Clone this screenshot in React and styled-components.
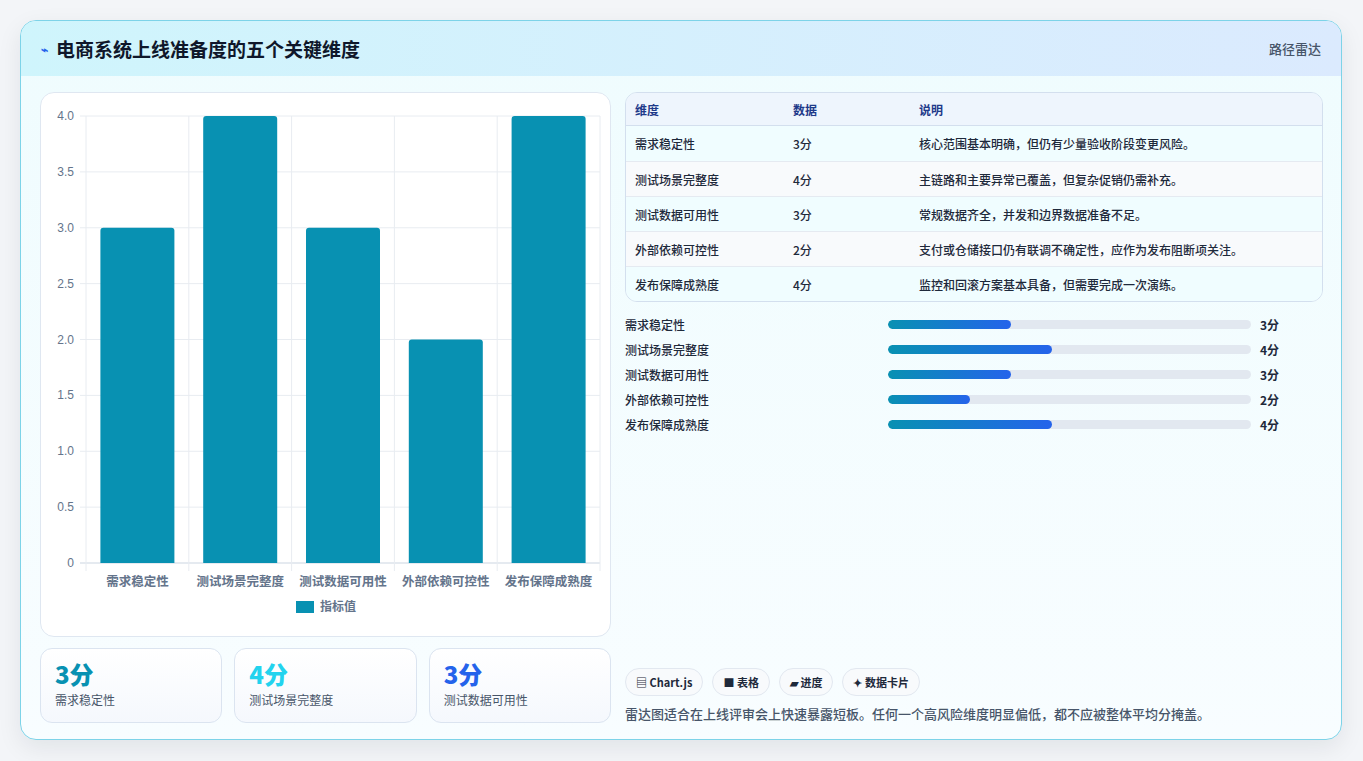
import React from "react";
import styled, { createGlobalStyle } from "styled-components";

const G = createGlobalStyle`
  html,body{margin:0;padding:0;background:#f3f5f8;}
  body{font-family:"Noto Sans CJK SC","Noto Sans",sans-serif;color:#1e293b;}
  *{box-sizing:border-box;}
`;

const data = [
  { name: "需求稳定性", v: 3, note: "核心范围基本明确，但仍有少量验收阶段变更风险。" },
  { name: "测试场景完整度", v: 4, note: "主链路和主要异常已覆盖，但复杂促销仍需补充。" },
  { name: "测试数据可用性", v: 3, note: "常规数据齐全，并发和边界数据准备不足。" },
  { name: "外部依赖可控性", v: 2, note: "支付或仓储接口仍有联调不确定性，应作为发布阻断项关注。" },
  { name: "发布保障成熟度", v: 4, note: "监控和回滚方案基本具备，但需要完成一次演练。" },
];

const Page = styled.div`padding:20px 20px 20px 20px;width:1363px;height:761px;`;
const Card = styled.div`
  width:1322px;height:720px;border:1px solid #7dd3e8;border-radius:16px;overflow:hidden;
  background:linear-gradient(180deg,#effcfe,#f8fdff);box-shadow:0 8px 24px rgba(15,23,42,.08);
  display:flex;flex-direction:column;
`;
const Header = styled.div`
  height:55px;flex:none;display:flex;align-items:center;justify-content:space-between;padding:0 20px;
  background:linear-gradient(90deg,#cff5fc,#dbeafe);
`;
const Title = styled.h1`margin:0;font-size:19px;font-weight:700;color:#0f172a;display:flex;align-items:center;gap:8px;`;
const Spark = styled.span`font-size:12px;color:#2563eb;`;
const Tag = styled.span`font-size:13px;color:#475569;font-weight:500;`;
const Body = styled.div`flex:1;display:grid;grid-template-columns:571px 1fr;gap:14px;padding:16px 18px 18px 19px;`;
const Col = styled.div`display:flex;flex-direction:column;gap:11px;min-height:0;`;
const ChartBox = styled.div`height:545px;background:#fff;border:1px solid #dfe7f1;border-radius:14px;`;
const Stats = styled.div`display:grid;grid-template-columns:repeat(3,1fr);gap:12px;`;
const Stat = styled.div`height:75px;border:1px solid #dbe4f0;border-radius:12px;background:linear-gradient(180deg,#fff,#f5f8fd);padding:10px 14px;`;
const Num = styled.div`font-size:24px;font-weight:800;line-height:30px;color:${p=>p.c};`;
const Lab = styled.div`font-size:12px;color:#475569;margin-top:2px;`;
const Table = styled.table`
  width:100%;border-collapse:separate;border-spacing:0;border:1px solid #d3dfee;border-radius:12px;overflow:hidden;font-size:12px;
  th{height:33px;text-align:left;font-weight:600;color:#1e3a8a;background:#eef5fd;border-bottom:1px solid #d3dfee;padding:0 9px;}
  td{height:35px;padding:0 9px;color:#1e293b;font-weight:500;border-top:1px solid #e5eaf1;}
  tr:nth-child(odd) td{background:#f0fdff;}
  tr:nth-child(even) td{background:#f8fafc;}
  tbody tr:first-child td{border-top:none;}
`;
const Bars = styled.div`display:flex;flex-direction:column;gap:7px;margin-top:2px;`;
const BarRow = styled.div`display:grid;grid-template-columns:263px 363px 1fr;align-items:center;gap:0;font-size:12px;font-weight:500;height:18px;`;
const Track = styled.div`height:9px;border-radius:5px;background:#e2e8f0;overflow:hidden;`;
const Fill = styled.div`height:100%;border-radius:5px;background:linear-gradient(90deg,#0891b2,#2563eb);`;
const Val = styled.span`padding-left:9px;font-weight:700;`;
const Chips = styled.div`margin-top:auto;display:flex;gap:9px;`;
const Chip = styled.span`height:28px;padding:0 10px;border:1px solid #e2e8f0;border-radius:14px;background:#f8fafc;font-size:11px;font-weight:600;color:#1e293b;display:flex;align-items:center;gap:3px;`;
const Note = styled.p`margin:8px 0 0;font-size:13px;color:#475569;font-weight:500;`;

function Chart() {
  const x0 = 45, x1 = 559, y0 = 470, yt = 23;
  const h = (y0 - yt);
  const cw = (x1 - x0) / 5;
  const ticks = [0, 0.5, 1, 1.5, 2, 2.5, 3, 3.5, 4];
  return (
    <svg width="571" height="545" style={{ display: "block" }}>
      {ticks.map(t => {
        const y = y0 - (t / 4) * h;
        return (
          <g key={t}>
            <line x1={x0 - 6} x2={x1} y1={y} y2={y} stroke={t === 0 ? "#cbd5e1" : "#e8ecf1"} />
            <text x={x0 - 12} y={y + 4} textAnchor="end" fontSize="12" fill="#64748b" fontFamily="Liberation Sans">{t === 0 ? "0" : t.toFixed(1)}</text>
          </g>
        );
      })}
      {[0, 1, 2, 3, 4, 5].map(i => (
        <line key={i} x1={x0 + i * cw} x2={x0 + i * cw} y1={yt} y2={y0 + 8} stroke="#e8ecf1" />
      ))}
      {data.map((d, i) => {
        const bh = (d.v / 4) * h;
        const cx = x0 + cw * i + cw / 2;
        return (
          <g key={d.name}>
            <path d={`M${cx - 37} ${y0} V${y0 - bh + 3} q0 -3 3 -3 h68 q3 0 3 3 V${y0} Z`} fill="#0891b2" />
            <text x={cx} y={y0 + 23} textAnchor="middle" fontSize="12.5" fontWeight="600" fill="#64748b">{d.name}</text>
          </g>
        );
      })}
      <rect x="255" y="508" width="18" height="12" fill="#0891b2" />
      <text x="279" y="518" fontSize="12" fontWeight="600" fill="#64748b">指标值</text>
    </svg>
  );
}

export default function App() {
  return (
    <Page>
      <G />
      <Card>
        <Header>
          <Title><Spark>⌁</Spark>电商系统上线准备度的五个关键维度</Title>
          <Tag>路径雷达</Tag>
        </Header>
        <Body>
          <Col>
            <ChartBox><Chart /></ChartBox>
            <Stats>
              <Stat><Num c="#0891b2">3分</Num><Lab>需求稳定性</Lab></Stat>
              <Stat><Num c="#22d3ee">4分</Num><Lab>测试场景完整度</Lab></Stat>
              <Stat><Num c="#2563eb">3分</Num><Lab>测试数据可用性</Lab></Stat>
            </Stats>
          </Col>
          <Col>
            <Table>
              <thead><tr><th style={{ width: 158 }}>维度</th><th style={{ width: 126 }}>数据</th><th>说明</th></tr></thead>
              <tbody>
                {data.map(d => (
                  <tr key={d.name}><td>{d.name}</td><td>{d.v}分</td><td>{d.note}</td></tr>
                ))}
              </tbody>
            </Table>
            <Bars>
              {data.map(d => (
                <BarRow key={d.name}>
                  <span>{d.name}</span>
                  <Track><Fill style={{ width: `${d.v * 11.3}%` }} /></Track>
                  <Val>{d.v}分</Val>
                </BarRow>
              ))}
            </Bars>
            <div style={{ flex: 1 }} />
            <div>
              <Chips>
                <Chip>▤ Chart.js</Chip>
                <Chip>■ 表格</Chip>
                <Chip>▰ 进度</Chip>
                <Chip>✦ 数据卡片</Chip>
              </Chips>
              <Note>雷达图适合在上线评审会上快速暴露短板。任何一个高风险维度明显偏低，都不应被整体平均分掩盖。</Note>
            </div>
          </Col>
        </Body>
      </Card>
    </Page>
  );
}
